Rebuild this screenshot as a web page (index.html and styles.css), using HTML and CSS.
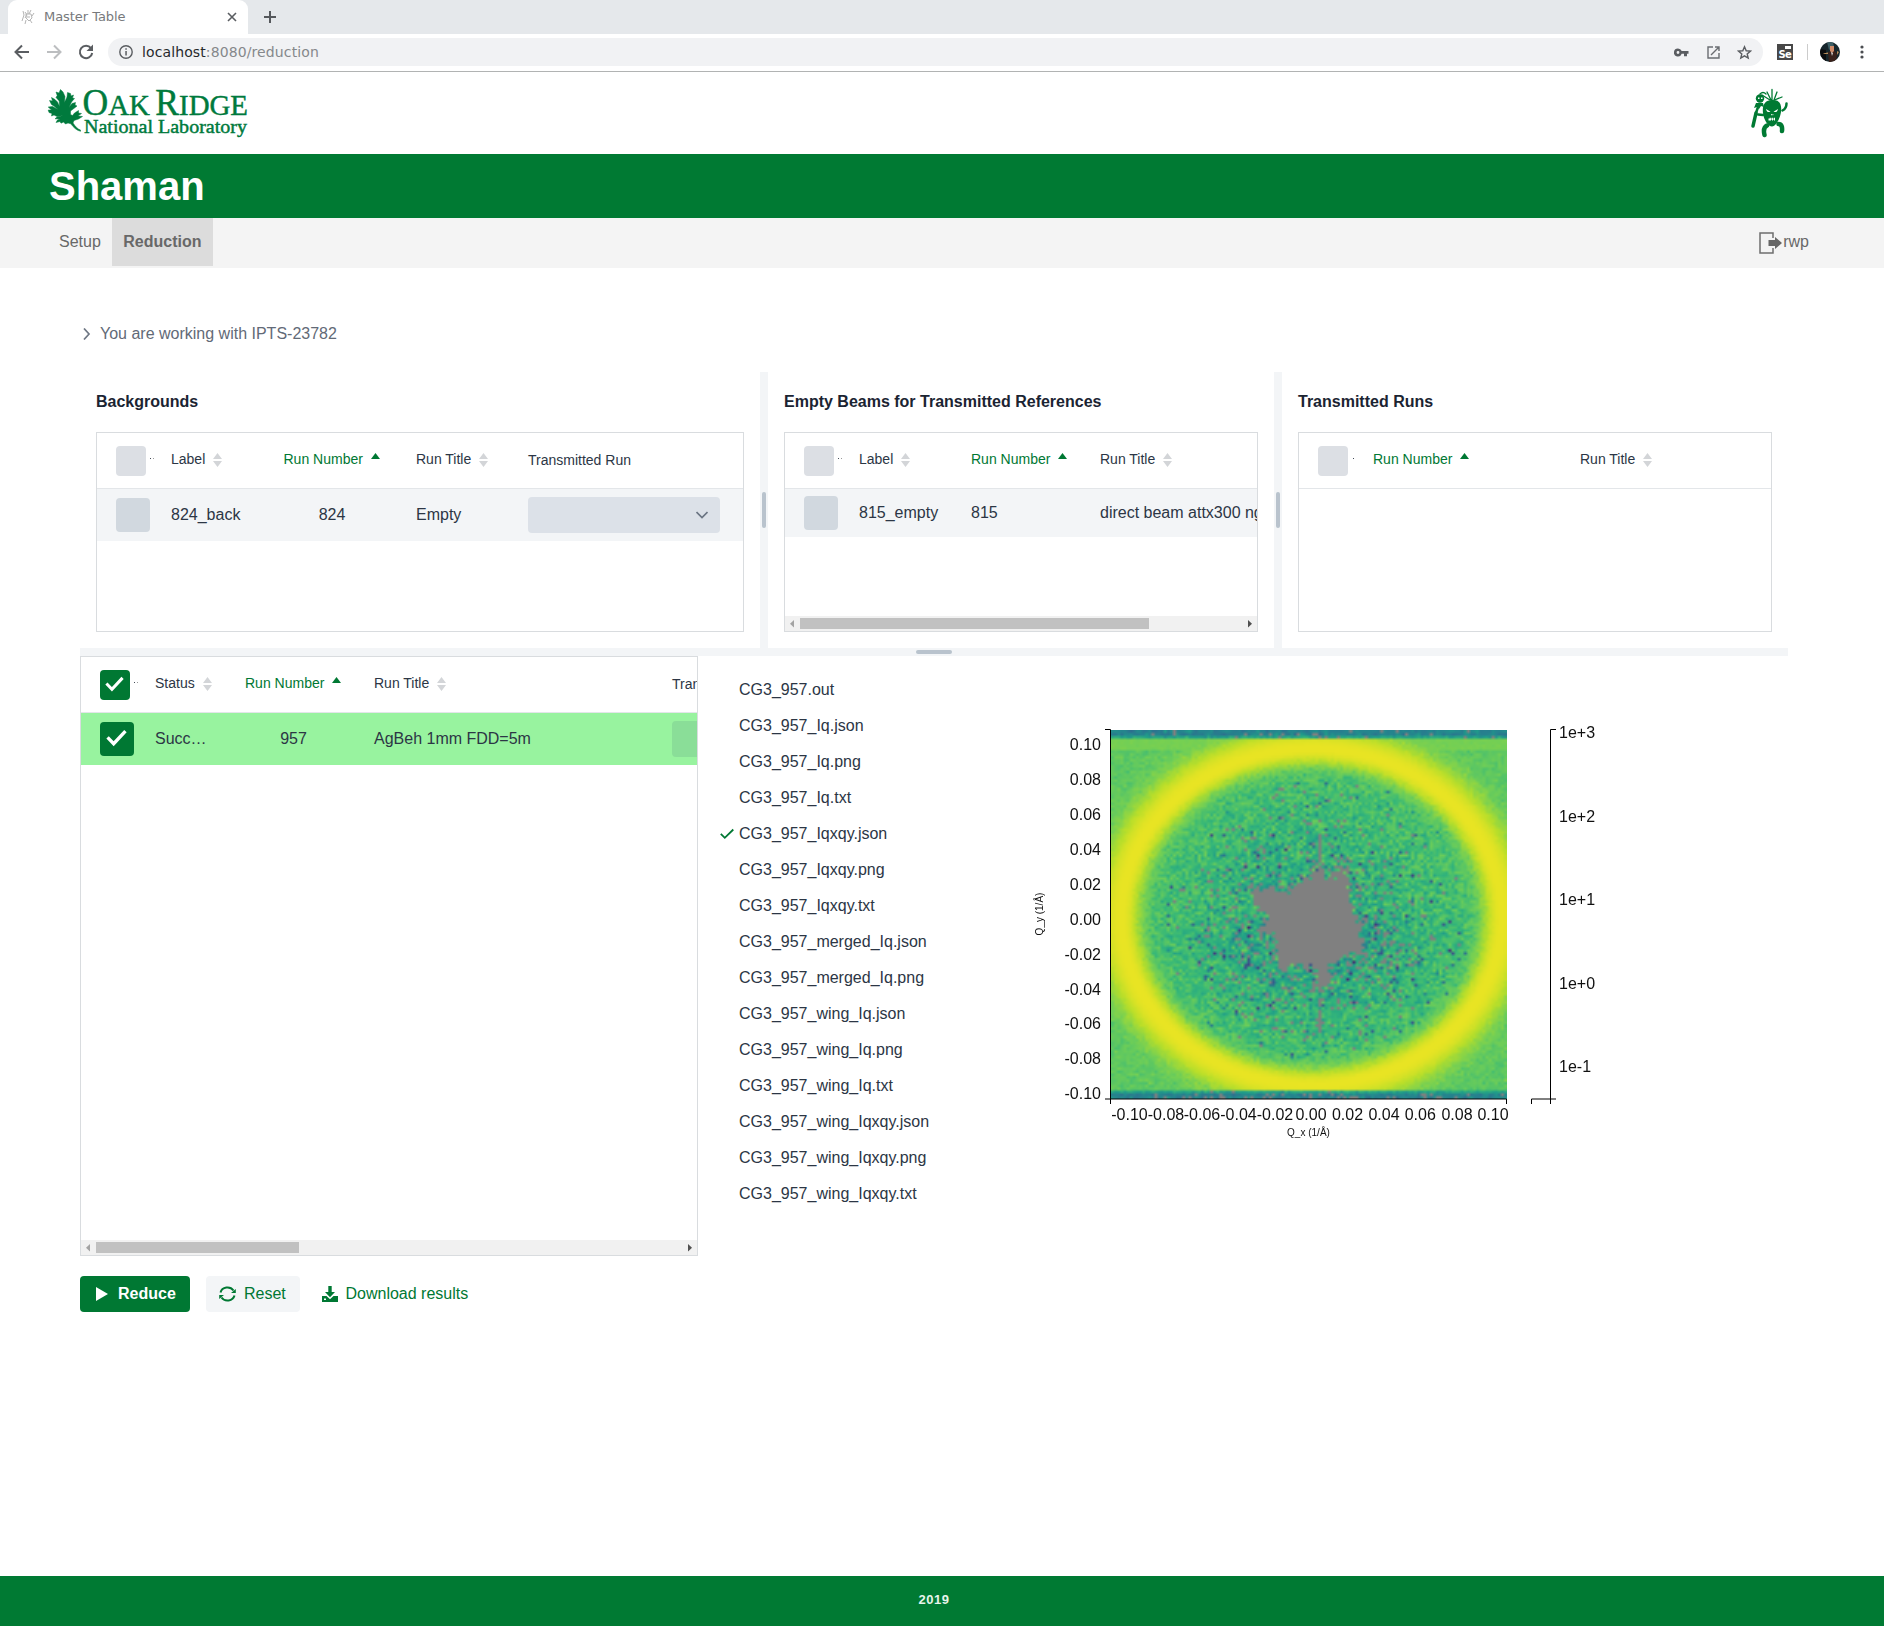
FILE: index.html
```html
<!DOCTYPE html>
<html lang="en">
<head>
<meta charset="utf-8">
<title>Master Table</title>
<link rel="stylesheet" href="styles.css">
</head>
<body>
<svg width="0" height="0" class="defs" aria-hidden="true">
  <symbol id="sort" viewBox="0 0 9 14"><path d="M4.5 0 9 6H0zM4.5 14 0 8h9z" fill="#d3d5d8"/></symbol>
  <symbol id="asc" viewBox="0 0 9 14"><path d="M4.5 0 9 6H0z" fill="#007833"/></symbol>
  <symbol id="tick" viewBox="0 0 20 20"><path d="M1.500 9 7.300 15 18.500 3" fill="none" stroke="currentColor" stroke-width="3.200"/></symbol>
</svg>

<div class="tabstrip">
  <div class="tab">
    <svg width="14" height="16" viewBox="0 0 14 16" fill="none" stroke="#b5b5b5"><path d="M2 2l1 4-2 6M4 3l2 3-2 3M7 1v4M10 1L8 5M5 5h5l1 4-3 3-3-3zM11 7l2-3M5 11l-1 4M9 11l2 3M6 8h3"/></svg>
    <span class="tab-title">Master Table</span>
    <svg width="10" height="10" viewBox="0 0 10 10" stroke="#5a5d61" stroke-width="1.600"><path d="M1 1l8 8M9 1L1 9"/></svg>
  </div>
  <svg class="plus" width="12" height="12" viewBox="0 0 12 12" stroke="#55585c" stroke-width="2"><path d="M6 0v12M0 6h12"/></svg>
</div>
<div class="toolbar">
  <svg width="16" height="16" viewBox="0 0 16 16" fill="none" stroke="#5a5d61" stroke-width="2"><path d="M15 8H2M8 1.500L1.500 8 8 14.500"/></svg>
  <svg width="16" height="16" viewBox="0 0 16 16" fill="none" stroke="#bcbec0" stroke-width="2"><path d="M1 8h13M8 1.500L14.500 8 8 14.500"/></svg>
  <svg width="16" height="16" viewBox="0 0 16 16"><path d="M13 4.200A6.200 6.200 0 1 0 14.200 9" fill="none" stroke="#5a5d61" stroke-width="2"/><path d="M15 .5V7H8.500z" fill="#5a5d61"/></svg>
  <div class="omnibox">
    <svg width="14" height="14" viewBox="0 0 14 14"><circle cx="7" cy="7" r="6.200" fill="none" stroke="#5a5d61" stroke-width="1.400"/><path d="M6.300 6h1.500v4.500H6.300zM6.300 3.300h1.500v1.500H6.300z" fill="#5a5d61"/></svg>
    <span class="url">localhost<i>:8080/reduction</i></span>
    <svg width="15" height="9" viewBox="0 0 15 9"><path d="M4 .5a4 4 0 1 0 3.700 5.300H10v2.500h3V5.800h1.500V3H7.700A4 4 0 0 0 4 .5zm0 2.600a1.400 1.400 0 1 1 0 2.800 1.400 1.400 0 0 1 0-2.800z" fill="#5a5d61"/></svg>
    <svg class="open" width="13" height="13" viewBox="0 0 13 13" fill="none" stroke="#6a6d71" stroke-width="1.400"><path d="M6 1H1v11h11V7M8 1h4v4M12 1L4 9"/></svg>
    <svg width="15" height="15" viewBox="0 0 15 15" fill="none" stroke="#5a5d61" stroke-width="1.400"><path d="M7.500 1.800l1.700 4 4.300.3-3.300 2.800 1 4.200-3.700-2.300-3.700 2.300 1-4.200L1.500 6.100l4.300-.3z"/></svg>
  </div>
  <div class="selenium"><b></b><span>Se</span></div>
  <i class="vline"></i>
  <svg width="20" height="20" viewBox="0 0 20 20"><defs><clipPath id="av"><circle cx="10" cy="10" r="10"/></clipPath></defs><g clip-path="url(#av)"><path fill="#16262c" d="M0 0h20v20H0z"/><path fill="#3d5f66" d="M7 0h6l1 5-5 3z"/><path fill="#0c0c0e" d="M0 7l6 1v12H0z"/><path fill="#3a211b" d="M8 10l6-2 3 4-1 8H9z"/><path fill="#d08a68" d="M10 4h4v5l-2 2-2-2z"/><path fill="#b58a58" d="M3 11.500l5-1v1.500H4zM17 9l2 1-2 3z"/><path fill="#ddd" d="M11 10l2 1-1 3z"/></g></svg>
  <svg class="dots" width="4" height="14" viewBox="0 0 4 14" fill="#4a4d51"><circle cx="2" cy="2" r="1.600"/><circle cx="2" cy="7" r="1.600"/><circle cx="2" cy="12" r="1.600"/></svg>
</div>

<header class="brand">
  <svg width="206" height="56" viewBox="0 0 206 56" fill="#007a3d" font-family="Liberation Serif, serif">
    <path stroke="#007a3d" stroke-width=".5" stroke-linejoin="round" d="M33.500 43.300C29.500 42.500 26.500 39.500 23.800 35.800L21 35 18.500 36 16.500 34 14 35.200 13 33.500 9 34.500 10.500 32 13 31 8 30.800 10 29 16.500 27.500 10 28.500 7 27 4.500 28 5 25.500 2 24.500 1.200 22 4.500 22 1.200 19 5.500 18.500 11 21.500 7.500 18.500 4.500 16.500 2.500 12.500 5.500 13 4.500 9.500 8 11.500 10.500 14 12.500 18.500 12.200 13 9 9.500 10.200 7.500 9 4 12 5 13.500 1.500 16 4 18 8.500 17.500 14.500 20 9 20.500 4.500 23.500 5.500 24 8 26.500 7 25.500 10 27.500 10.500 24.500 14 22 19.500 25 15.500 28.500 14.500 28 17 30 18 27.500 20 23.500 23 23.500 26.500 25.500 27.500 27.500 25 31.500 22.500 31.500 25 34.500 25.500 31 28 35.500 28.500 31.500 31 27 32.500 26 35C28.500 38.500 30.500 41 33.500 42z"/>
    <g stroke="#007a3d" stroke-width=".45">
    <text x="35.500" y="26.500" font-size="37" textLength="165.500" lengthAdjust="spacingAndGlyphs">O<tspan font-size="30">AK</tspan><tspan font-size="22"> </tspan>R<tspan font-size="30">IDGE</tspan></text>
    <text x="37" y="45" font-size="19" textLength="163" lengthAdjust="spacingAndGlyphs">National Laboratory</text>
    </g>
  </svg>
  <svg width="38" height="50" viewBox="0 0 38 50">
    <g fill="none" stroke="#007a33" stroke-linecap="round">
      <path stroke-width="3.400" d="M2 38L5 25"/><path stroke-width="2.500" d="M5 25L8 16"/>
      <path stroke-width="2.500" d="M7 26.500L12 27M31.500 22.500C34.500 21 35.500 19 35.500 15.500"/>
      <path stroke-width="4.500" d="M16 37.500C13 39 12.500 43 13.500 47M27.500 36C30.500 36 31.500 39 31 43"/>
      <path stroke-width="1.300" d="M21 13V1.500M20 12L16 4M19 12L11 7M23 12L26 4M23.500 12L31 9M9 6q3-3 6 0"/>
    </g>
    <g fill="#007a33"><path d="M21 12c7.500-.5 10 4 9 12-1 7-5.500 14.500-9 14.500S12.500 32 12 25C11 17 14 12 21 12z"/><circle cx="9" cy="10.500" r="4.200"/><path d="M5 15h7l1 4-3-1-2 3-2-2-3 1z"/></g>
    <path fill="#fff" d="M15 21l4.500 2.700c-2.500 1-4 0-4.500-2.700zM27 21l-4.500 2.700c2.500 1 4 0 4.500-2.700zM17.500 32.500V30.500h1.200v-.8h1.100v1h.9v-1h1.200v1h.9v-1H24v2.800h-1v-1h-1v1h-1v-1h-1v1zM20 26h.8v1.200H20zM21.500 26h.8v1.200h-.8zM7 9.500h1.500V11H7zM10 9.500h1.500V11H10z"/>
  </svg>
</header>
<div class="banner">Shaman</div>
<nav class="menu">
  <a>Setup</a><a class="active">Reduction</a>
  <span class="user"><svg width="24" height="22" viewBox="0 0 24 22"><path d="M14 6V1H1v20h13v-5" fill="none" stroke="#6e6e6e" stroke-width="1.500"/><path d="M9.500 8H16V5l7 6-7 6v-3H9.500z" fill="#666"/></svg>rwp</span>
</nav>

<main>
  <div class="details"><svg width="8" height="12" viewBox="0 0 8 12" fill="none" stroke="#6f7784" stroke-width="1.700"><path d="M1 .5L6 6l-5 5.500"/></svg>You are working with IPTS-23782</div>

  <div class="upper">
    <section class="panel backgrounds">
      <h2>Backgrounds</h2>
      <div class="table">
        <div class="row head">
          <div class="pick"><i class="box"></i><i class="cut"></i></div>
          <div>Label<svg class="s"><use href="#sort"/></svg></div>
          <div class="sorted mid">Run Number<svg class="s"><use href="#asc"/></svg></div>
          <div>Run Title<svg class="s"><use href="#sort"/></svg></div>
          <div class="plain">Transmitted Run</div>
        </div>
        <div class="row body">
          <div class="pick"><i class="box"></i></div>
          <div>824_back</div><div class="mid">824</div><div>Empty</div>
          <div><span class="select"><svg width="12" height="8" viewBox="0 0 12 8" fill="none" stroke="#6b7583" stroke-width="1.700"><path d="M.5 1L6 6.500 11.500 1"/></svg></span></div>
        </div>
      </div>
    </section>
    <div class="splitter"><i></i></div>
    <section class="panel beams">
      <h2>Empty Beams for Transmitted References</h2>
      <div class="table">
        <div class="row head">
          <div class="pick"><i class="box"></i><i class="cut"></i></div>
          <div>Label<svg class="s"><use href="#sort"/></svg></div>
          <div class="sorted">Run Number<svg class="s"><use href="#asc"/></svg></div>
          <div>Run Title<svg class="s"><use href="#sort"/></svg></div>
        </div>
        <div class="row body">
          <div class="pick"><i class="box"></i></div>
          <div>815_empty</div><div>815</div><div>direct beam attx300 ng</div>
        </div>
        <div class="scroll"><svg width="15" height="15" viewBox="0 0 15 15"><path d="M9 4v7.500L5 7.800z" fill="#a3a3a3"/></svg><i></i><svg width="15" height="15" viewBox="0 0 15 15"><path d="M6 4v7.500l4-3.700z" fill="#505050"/></svg></div>
      </div>
    </section>
    <div class="splitter"><i></i></div>
    <section class="panel transmitted">
      <h2>Transmitted Runs</h2>
      <div class="table">
        <div class="row head">
          <div class="pick"><i class="box"></i><i class="cut one"></i></div>
          <div class="sorted">Run Number<svg class="s"><use href="#asc"/></svg></div>
          <div>Run Title<svg class="s"><use href="#sort"/></svg></div>
        </div>
      </div>
    </section>
  </div>
  <div class="splitter wide"><i></i></div>

  <div class="lower">
    <div class="table samples">
      <div class="row head">
        <div class="pick"><i class="box on"><svg width="19" height="19"><use href="#tick"/></svg></i><i class="cut"></i></div>
        <div>Status<svg class="s"><use href="#sort"/></svg></div>
        <div class="sorted mid">Run Number<svg class="s"><use href="#asc"/></svg></div>
        <div>Run Title<svg class="s"><use href="#sort"/></svg></div>
        <div class="plain">Transmitted</div>
      </div>
      <div class="row body done">
        <div class="pick"><i class="box on"><svg width="21" height="21"><use href="#tick"/></svg></i></div>
        <div>Succ…</div><div class="mid">957</div><div>AgBeh 1mm FDD=5m</div>
        <div><span class="select"></span></div>
      </div>
      <div class="scroll"><svg width="15" height="15" viewBox="0 0 15 15"><path d="M9 4v7.500L5 7.800z" fill="#a3a3a3"/></svg><i></i><svg width="15" height="15" viewBox="0 0 15 15"><path d="M6 4v7.500l4-3.700z" fill="#505050"/></svg></div>
    </div>
    <ul class="files">
      <li>CG3_957.out</li><li>CG3_957_Iq.json</li><li>CG3_957_Iq.png</li><li>CG3_957_Iq.txt</li>
      <li class="chosen"><svg width="14" height="12" viewBox="0 0 14 12" fill="none" stroke="#007833" stroke-width="1.800"><path d="M.8 5.800L4.800 9.800 13.300 1.500"/></svg>CG3_957_Iqxqy.json</li>
      <li>CG3_957_Iqxqy.png</li><li>CG3_957_Iqxqy.txt</li><li>CG3_957_merged_Iq.json</li><li>CG3_957_merged_Iq.png</li><li>CG3_957_wing_Iq.json</li><li>CG3_957_wing_Iq.png</li><li>CG3_957_wing_Iq.txt</li><li>CG3_957_wing_Iqxqy.json</li><li>CG3_957_wing_Iqxqy.png</li><li>CG3_957_wing_Iqxqy.txt</li>
    </ul>
    <div class="chart">
      <canvas id="heat" width="128" height="128"></canvas>
      <svg width="600" height="460" viewBox="0 0 600 460">
        <g fill="none" stroke="#000"><path d="M85 29.500h5.500v369.500H85M90.500 404v-5h396v5M536 29.500h-5.500V404M536 399H511.500v5"/></g>
        <g text-anchor="end"><text x="81" y="49.500">0.10</text><text x="81" y="84.500">0.08</text><text x="81" y="119.500">0.06</text><text x="81" y="154.500">0.04</text><text x="81" y="189.500">0.02</text><text x="81" y="224.500">0.00</text><text x="81" y="259.500">-0.02</text><text x="81" y="294.500">-0.04</text><text x="81" y="328.500">-0.06</text><text x="81" y="363.500">-0.08</text><text x="81" y="398.500">-0.10</text></g>
        <g text-anchor="middle"><text x="109.500" y="420">-0.10</text><text x="146" y="420">-0.08</text><text x="182" y="420">-0.06</text><text x="218.500" y="420">-0.04</text><text x="255" y="420">-0.02</text><text x="291" y="420">0.00</text><text x="327.500" y="420">0.02</text><text x="364" y="420">0.04</text><text x="400.300" y="420">0.06</text><text x="437" y="420">0.08</text><text x="473" y="420">0.10</text>
        <text class="label" x="288.500" y="436">Q_x (1/Å)</text><text class="label" transform="translate(23 214) rotate(-90)">Q_y (1/Å)</text></g>
        <text x="539" y="38">1e+3</text><text x="539" y="122">1e+2</text><text x="539" y="205">1e+1</text><text x="539" y="289">1e+0</text><text x="539" y="372">1e-1</text>
      </svg>
    </div>
  </div>

  <div class="actions">
    <button class="primary"><svg width="12" height="14" viewBox="0 0 12 14"><path d="M0 0l12 7-12 7z" fill="#fff"/></svg>Reduce</button>
    <button class="soft"><svg width="17" height="16" viewBox="0 0 17 16"><g fill="none" stroke="#007833" stroke-width="2"><path d="M1.500 6.500A7.200 6.700 0 0 1 14.500 4.500M15.500 9.500A7.200 6.700 0 0 1 2.500 11.500"/></g><path d="M16.800 3v4H12zM.2 13V9H5z" fill="#007833"/></svg>Reset</button>
    <button class="link"><svg width="16" height="16" viewBox="0 0 16 16" fill="#007833"><path d="M6.300 0h3.400v6H13l-5 5.200L3 6h3.300z"/><path d="M0 10h4.500L8 13.300 11.500 10H16v6H0z"/><path d="M2 12.500h2v1.500H2z" fill="#fff"/></svg>Download results</button>
  </div>
</main>
<footer>2019</footer>
<script src="heatmap.js"></script>
</body>
</html>
```
FILE: styles.css
```css
* { box-sizing: border-box; }
body { margin: 0; width: 1884px; height: 1626px; overflow: hidden; display: flex; flex-direction: column; background: #fff; font: 16px/20px "Liberation Sans", Arial, sans-serif; color: #2c3645; }
svg, canvas { display: block; flex: none; }
.defs { position: absolute; }
i { font-style: normal; }

.tabstrip { flex: none; height: 34px; background: #e5e8eb; display: flex; align-items: center; padding-left: 8px; font-family: "DejaVu Sans", sans-serif; }
.tab { width: 240px; height: 34px; padding: 0 11px 0 13px; background: #fff; border-radius: 9px 9px 0 0; display: flex; align-items: center; }
.tab-title { flex: 1; margin-left: 9px; font-size: 13px; letter-spacing: -.05px; color: #77797c; }
.plus { margin-left: 16px; }
.toolbar { flex: none; height: 38px; padding: 0 0 1px 14px; border-bottom: 1px solid #b1b3b3; display: flex; align-items: center; gap: 16px; }
.omnibox { width: 1655px; height: 28px; border-radius: 14px; background: #f1f2f4; display: flex; align-items: center; padding: 0 11px 0 11px; margin-left: -2px; margin-right: -2px; }
.url { flex: 1; margin-left: 9px; font: 14px "DejaVu Sans", sans-serif; letter-spacing: .11px; color: #27292c; }
.url i { color: #85888b; }
.open { margin: 0 17px 0 18px; }
.omnibox .open + svg { margin-left: 0; }
.selenium { width: 16px; height: 16px; background: #484848; color: #fff; font: bold 10px/11px "DejaVu Sans", sans-serif; display: flex; flex-direction: column; align-items: flex-end; padding: 2px 2px 0 0; letter-spacing: -.8px; }
.selenium b { width: 6px; height: 3px; background: #fff; }
.vline { width: 1px; height: 16px; background: #ccc; margin: 0 -4px 0 -2px; }
.dots { margin-left: 4px; }

.brand { flex: none; height: 82px; padding: 16px 95px 0 47px; display: flex; justify-content: space-between; }
.banner { flex: none; height: 64px; padding-left: 49px; background: #007a33; color: #fff; font-size: 40px; font-weight: bold; line-height: 65px; }
.menu { flex: none; height: 50px; padding: 0 75px 0 48px; display: flex; background: #f4f4f4; color: #686868; }
.menu a { height: 48px; padding: 0 11px; line-height: 47px; }
.menu .active { background: #dcdcdc; font-weight: bold; padding-left: 11.5px; }
.user { margin-left: auto; display: flex; align-items: center; height: 47px; }
.user svg { margin-top: 3px; }

main { flex: 1; padding: 0 96px 0 80px; }
.details { height: 104px; padding: 28px 0 0 3px; display: flex; align-items: center; gap: 9px; color: #626a77; }
.upper { display: flex; height: 276px; }
.panel { width: 506px; padding: 16px; }
.panel.backgrounds { width: 680px; }
h2 { margin: 0; height: 44px; font-size: 16px; line-height: 28px; color: #1b2432; }
.splitter { width: 8px; background: #f3f5f7; display: flex; align-items: center; justify-content: center; }
.splitter i { width: 4px; height: 36px; border-radius: 2px; background: #b9c3cd; }
.splitter.wide { width: auto; height: 8px; }
.splitter.wide i { width: 36px; height: 4px; }
.table { height: 200px; border: 1px solid #d9dcdf; display: flex; flex-direction: column; overflow: hidden; }
.row { flex: none; display: grid; align-items: center; white-space: nowrap; padding-left: 19px; }
.row > div { display: flex; align-items: center; }
.head { height: 56px; border-bottom: 1px solid #e3e6e9; font-size: 14px; }
.head > div { height: 53px; padding-bottom: 1px; align-self: start; }
.head > .pick { height: 55px; padding: 0; }
.head > .plain { height: 54px; padding: 0; }
.body { height: 52px; background: #f3f5f7; }
.beams .body { height: 48px; }
.s { width: 9px; height: 14px; margin: 1px 0 0 8px; }
.sorted { color: #007833; }
.box { width: 34px; height: 34px; border-radius: 4px; background: #d1d8df; display: flex; align-items: center; justify-content: center; color: #fff; }
.head .box { width: 30px; height: 30px; background: #dcdfe4; }
.row .box.on { background: #007833; }
.box.on svg { margin: -1px 2px 0 0; }
.cut { width: 4px; height: 1px; margin: -4px 0 0 4px; background: linear-gradient(90deg, #444c58 1px, transparent 1px 3px, #999 3px); }
.cut.one { width: 1px; margin-left: 5px; }
.select { width: 192px; height: 36px; border-radius: 4px; background: #dce1e8; display: flex; align-items: center; justify-content: flex-end; padding-right: 12px; }
.done .select { background: #8ade98; }
.backgrounds .row { grid-template-columns: 55px 105px 140px 112px 192px; }
.mid { justify-content: center; }
.backgrounds .mid { padding-right: 28px; }
.backgrounds .head .mid { padding-left: 7.5px; padding-right: 0; justify-content: flex-start; }
.beams .row { grid-template-columns: 55px 112px 129px 200px; }
.transmitted .row { grid-template-columns: 55px 207px 200px; }
.samples { width: 618px; height: 600px; }
.samples .row { grid-template-columns: 55px 90px 129px 298px 192px; }
.samples .head .mid { padding: 0 0 1px; justify-content: flex-start; }
.samples .body .mid { padding-right: 32px; }
.done { background: #98f39f; }
.scroll { height: 15px; margin-top: auto; background: #f1f1f1; display: flex; align-items: center; justify-content: space-between; }
.scroll i { width: 349px; height: 11px; background: #c1c1c1; margin-right: auto; }
.samples .scroll i { width: 203px; }

.lower { display: flex; height: 600px; }
.files { width: 322px; margin: 0; padding: 16px 0 0 41px; list-style: none; }
.files li { height: 36px; display: flex; align-items: center; }
.chosen svg { margin: 0 5px 0 -19px; }
.chart { position: relative; margin-top: 44px; fill: #111; }
.chart .label { font-size: 10px; }
#heat { position: absolute; left: 91px; top: 30px; width: 396px; height: 369px; }
.chart svg { position: relative; }

.actions { display: flex; margin-top: 20px; }
button { height: 36px; border: 0; border-radius: 4px; background: none; font: inherit; color: #007833; display: flex; align-items: center; padding: 0; }
.primary { width: 110px; padding-left: 16px; gap: 10px; background: #007833; color: #fff; font-weight: bold; }
.soft { width: 94px; margin-left: 16px; padding-left: 13px; gap: 8px; background: #f3f5f7; }
.link { margin-left: 22px; gap: 7.5px; }
footer { flex: none; height: 50px; padding-right: 16px; background: #007a33; color: #e8f5ec; font-size: 13px; font-weight: bold; letter-spacing: .5px; line-height: 47px; text-align: center; }
```
FILE: heatmap.js
```js
// Detector counts on a log scale: a scattering ring, noisy interior, masked beam stop.
(function () {
  var N = 128, ctx = document.getElementById('heat').getContext('2d');
  var img = ctx.createImageData(N, N), seed = 957;
  function rnd() {
    seed = (seed + 0x6D2B79F5) | 0;
    var t = Math.imul(seed ^ (seed >>> 15), 1 | seed);
    t = (t + Math.imul(t ^ (t >>> 7), 61 | t)) ^ t;
    return ((t ^ (t >>> 14)) >>> 0) / 4294967296;
  }
  function gauss() { return rnd() + rnd() + rnd() + rnd() - 2; }
  var map = [[68,1,84],[72,40,120],[62,74,137],[49,104,142],[38,130,142],[31,158,137],[53,183,121],[110,206,88],[181,222,43],[248,230,33]];
  function color(v) {
    v = Math.max(0, Math.min(0.999, v)) * 9;
    var i = Math.floor(v), f = v - i;
    return map[i].map(function (c, k) { return c + (map[i + 1][k] - c) * f; });
  }
  var mask = [[44,54],[51,55],[57,56],[60,53],[61,50],[63,52],[66,50],[67,46],[69,52],[72,51],[74,47],[76,48],[77,54],[77,61],[80,65],[80,70],[82,74],[81,77],[76,78],[71,81],[69,82],[59,82],[55,83],[53,79],[53,71],[47,70],[51,66],[47,61],[46,57]];
  function masked(x, y) {
    var hit = false;
    x += (rnd() - .5) * 2.6; y += (rnd() - .5) * 2.6;
    for (var i = 0, j = mask.length - 1; i < mask.length; j = i++) {
      var a = mask[i], b = mask[j];
      if ((a[1] > y) !== (b[1] > y) && x < (b[0] - a[0]) * (y - a[1]) / (b[1] - a[1]) + a[0]) hit = !hit;
    }
    return hit || (Math.abs(x - 68.5) < 2.2 && y > 81 && y < 90);
  }
  for (var y = 0; y < N; y++) for (var x = 0; x < N; x++) {
    var dx = (x - 64.3) / 61.3, dy = (y - 64.3) / 58.2, r = Math.sqrt(dx * dx + dy * dy);
    var ring = Math.exp(-Math.pow(Math.abs(r - 1) / (r > 1 ? .145 : .105), 2.3));
    var inner = Math.max(0, 1 - r);
    var base = r > 1 ? .745 : .73 - inner * .13 - (dy > 0 ? inner * .04 : 0);
    var noise = gauss() * (r > 1 ? .035 : .055 + inner * .1) * (1 - ring);
    var v = base + (.975 - base) * ring + noise;
    if (r < 1) v = Math.min(v, Math.max(.77, base + (.975 - base) * ring + .02));
    var low = dy > 0 ? 1 : .55;
    var p = r < .82 ? Math.pow(1 - r / .9, 1.2) * .3 * low : 0;
    if (Math.abs(dx) > .55 && r < .9) p *= .5;
    if (r < .85 && rnd() < .15 * inner * low) v -= .12 + rnd() * .35;
    var spike = x === 67 && ((y > 36 && y < 48) || (y > 89 && y < 103)) && rnd() < .75;
    var grey = masked(x + .5, y + .5) || spike || rnd() < p;
    if (y < 3 || y > 124) {
      v = (y === 2 || y === 125 ? .58 : .45) + gauss() * .07;
      grey = rnd() < (y > 125 ? .13 : .06);
    } else if (y < 7) v = Math.max(v, .79 + gauss() * .01);
    var c = grey ? [128, 128, 128] : color(v), o = (y * N + x) * 4;
    img.data[o] = c[0]; img.data[o + 1] = c[1]; img.data[o + 2] = c[2]; img.data[o + 3] = 255;
  }
  ctx.putImageData(img, 0, 0);
})();
```
